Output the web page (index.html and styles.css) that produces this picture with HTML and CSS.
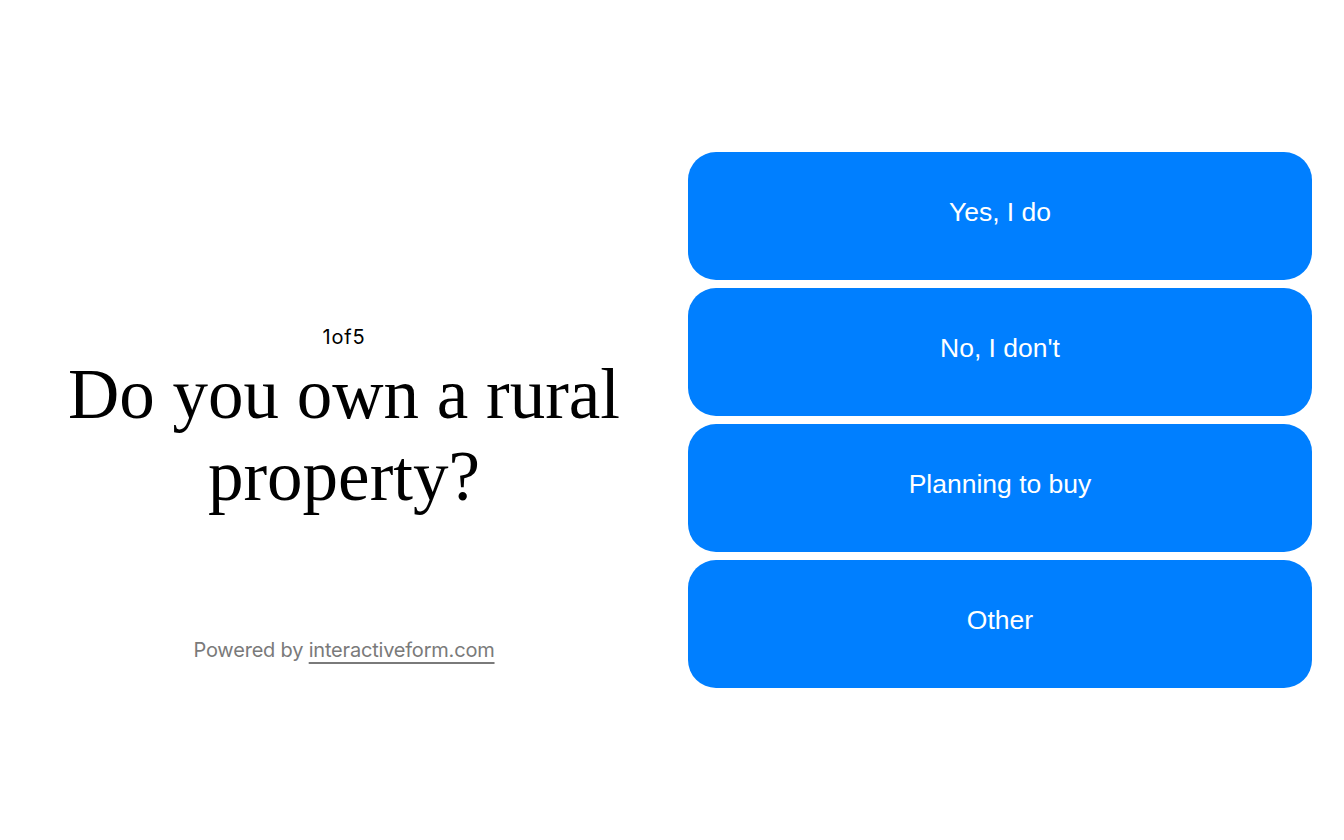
FILE: index.html
```html
<!DOCTYPE html>
<html lang="en">
  <head>
    <meta charset="UTF-8" />
    <meta name="viewport" content="width=device-width, initial-scale=1.0" />
    <title>Rural Property Survey</title>
    <link rel="stylesheet" href="styles.css">
  </head>
  <body>
    <main class="form">
      <section class="question-side">
        <div class="question">
          <p class="step">1of5</p>
          <h1 class="title">Do you own a rural property?</h1>
        </div>
        <p class="powered">Powered by <a href="#">interactiveform.com</a></p>
      </section>
      <section class="options">
        <button class="option">Yes, I do</button>
        <button class="option">No, I don't</button>
        <button class="option">Planning to buy</button>
        <button class="option">Other</button>
      </section>
    </main>
  </body>
</html>
```

FILE: styles.css
```css
* {
  margin: 0;
  padding: 0;
  box-sizing: border-box;
}

body {
  background-color: #fff;
  height: 100vh;
  overflow: hidden;
}

.form {
  display: grid;
  grid-template-columns: 1fr 1fr;
  align-content: center;
  gap: 32px;
  height: 100vh;
  padding: 32px;
}

.question-side {
  display: grid;
  grid-template-rows: 1fr auto 1fr;
  text-align: center;
}

.question {
  grid-row: 2;
}

.step {
  font-family: Inter, "Liberation Sans", sans-serif;
  font-size: 20px;
  line-height: 24px;
  letter-spacing: 0.04em;
  color: #000;
  margin-top: 2px;
  margin-bottom: 4px;
}

.title {
  font-family: "Liberation Serif", serif;
  font-size: 71px;
  font-weight: normal;
  line-height: 82px;
  color: #000;
}

.powered {
  grid-row: 3;
  align-self: end;
  margin-bottom: 26px;
  font-family: Inter, "Liberation Sans", sans-serif;
  font-size: 20px;
  line-height: 24px;
  letter-spacing: -0.01em;
  color: #7a7a7a;
}

.powered a {
  color: #7a7a7a;
  text-decoration: underline;
  text-decoration-thickness: 2px;
  text-underline-offset: 5px;
}

.options {
  display: flex;
  flex-direction: column;
  gap: 8px;
}

.option {
  height: 128px;
  padding-bottom: 8px;
  border: none;
  border-radius: 28px;
  background-color: #007fff;
  color: #fff;
  font-family: "Liberation Sans", Arial, sans-serif;
  font-size: 26.5px;
  cursor: pointer;
}

.option:hover {
  background-color: #0070e6;
}
```
